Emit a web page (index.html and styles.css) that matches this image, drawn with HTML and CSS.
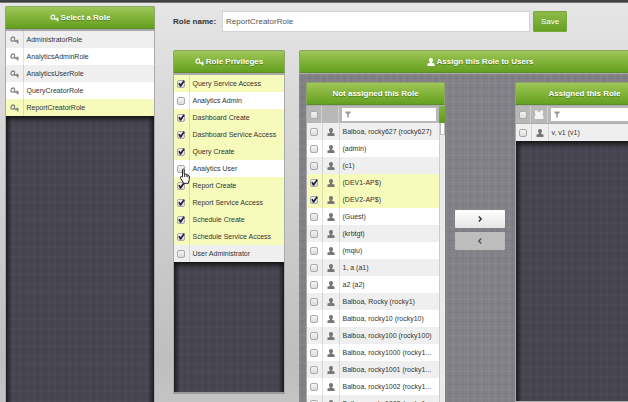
FILE: index.html
```html
<!DOCTYPE html>
<html lang="en">
<head>
<meta charset="utf-8">
<title>Roles</title>
<link rel="stylesheet" href="styles.css">
</head>
<body>
<svg class="defs" aria-hidden="true">
  <symbol id="key" viewBox="0 0 9 8"><path d="M4.7 4.6L2.6 5.2Q.7 5 .9 3.2Q1.4 .8 3.4 .9Q5 1.2 4.7 3.2L4.3 4.2L6.2 5.6" fill="none" stroke="currentColor" stroke-width="1.1"/><path d="M5.4 5.3L7.8 3.9V7.6M6 5.8H8.6" fill="none" stroke="currentColor" stroke-width="1"/></symbol>
  <symbol id="user" viewBox="0 0 8 8"><path d="M4 0C5.4 0 6 .9 6 2.1C6 3.2 5.5 3.7 5.2 4.2V4.9L7.5 5.6V8H.5V5.6L2.8 4.9V4.2C2.5 3.7 2 3.2 2 2.1C2 .9 2.6 0 4 0Z" fill="currentColor"/></symbol>
  <symbol id="users" viewBox="0 0 10 9"><path d="M1 .5H3.6V2.5L5 1.2L6.4 2.5V.5H9V4L8 4.5L9.4 6V9H.6V6L2 4.5L1 4Z" fill="currentColor"/></symbol>
  <symbol id="funnel" viewBox="0 0 6 7"><path d="M.3 .5H5.7V1.6L3.7 3.4V6.8H2.3V3.4L.3 1.6Z" fill="currentColor"/></symbol>
</svg>
<div class="topbar"></div>
<div class="page">
  <section class="panel roles">
    <h2 class="title"><svg class="key"><use href="#key"/></svg>Select a Role</h2>
    <div class="well">
      <table class="list">
        <tr><td class="icon"><svg class="key"><use href="#key"/></svg></td><td>AdministratorRole</td></tr>
        <tr><td class="icon"><svg class="key"><use href="#key"/></svg></td><td>AnalyticsAdminRole</td></tr>
        <tr><td class="icon"><svg class="key"><use href="#key"/></svg></td><td>AnalyticsUserRole</td></tr>
        <tr><td class="icon"><svg class="key"><use href="#key"/></svg></td><td>QueryCreatorRole</td></tr>
        <tr class="on"><td class="icon"><svg class="key"><use href="#key"/></svg></td><td>ReportCreatorRole</td></tr>
      </table>
    </div>
  </section>
  <main class="main">
    <form class="name-form">
      <label for="role-name">Role name:</label>
      <input type="text" id="role-name" value="ReportCreatorRole">
      <button type="button" class="save">Save</button>
    </form>
    <div class="columns">
      <section class="panel privileges">
        <h2 class="title"><svg class="key"><use href="#key"/></svg>Role Privileges</h2>
        <div class="well">
          <table class="list">
            <tr class="on"><td class="tick"><input type="checkbox" id="p1" checked></td><td><label for="p1">Query Service Access</label></td></tr>
            <tr><td class="tick"><input type="checkbox" id="p2"></td><td><label for="p2">Analytics Admin</label></td></tr>
            <tr class="on"><td class="tick"><input type="checkbox" id="p3" checked></td><td><label for="p3">Dashboard Create</label></td></tr>
            <tr class="on"><td class="tick"><input type="checkbox" id="p4" checked></td><td><label for="p4">Dashboard Service Access</label></td></tr>
            <tr class="on"><td class="tick"><input type="checkbox" id="p5" checked></td><td><label for="p5">Query Create</label></td></tr>
            <tr><td class="tick"><input type="checkbox" id="p6"><svg class="cursor" viewBox="0 0 10 16"><path d="M2.5 9V1.5Q3.3 .2 4.2 1.5V6L5.5 6L6.8 6.5L8 7L9.3 8V11.5L8.3 15.3H3.6L.6 10.2V8.8L1.4 8.5Z" fill="#fff" stroke="#222" stroke-width="1"/><path d="M4.5 6V9M6.2 6.6V9M7.8 7.2V9.4" stroke="#222" stroke-width=".8"/></svg></td><td><label for="p6">Analytics User</label></td></tr>
            <tr class="on"><td class="tick"><input type="checkbox" id="p7" checked></td><td><label for="p7">Report Create</label></td></tr>
            <tr class="on"><td class="tick"><input type="checkbox" id="p8" checked></td><td><label for="p8">Report Service Access</label></td></tr>
            <tr class="on"><td class="tick"><input type="checkbox" id="p9" checked></td><td><label for="p9">Schedule Create</label></td></tr>
            <tr class="on"><td class="tick"><input type="checkbox" id="p10" checked></td><td><label for="p10">Schedule Service Access</label></td></tr>
            <tr><td class="tick"><input type="checkbox" id="p11"></td><td><label for="p11">User Administrator</label></td></tr>
          </table>
        </div>
      </section>
      <section class="panel assign">
        <h2 class="title"><svg class="user"><use href="#user"/></svg>Assign this Role to Users</h2>
        <div class="transfer">
          <section class="panel users">
            <h3 class="title">Not assigned this Role</h3>
            <div class="filter">
              <span class="tick"><input type="checkbox" aria-label="Select all unassigned"></span>
              <span class="icon"></span>
              <span class="search"><svg class="funnel"><use href="#funnel"/></svg><input type="text" aria-label="Filter unassigned"></span>
              <span class="cap"></span>
            </div>
            <div class="scroll">
              <table class="list">
                <tr><td class="tick"><input type="checkbox" id="u1"></td><td class="icon"><svg class="user"><use href="#user"/></svg></td><td><label for="u1">Balboa, rocky627 (rocky627)</label></td></tr>
                <tr><td class="tick"><input type="checkbox" id="u2"></td><td class="icon"><svg class="user"><use href="#user"/></svg></td><td><label for="u2">(admin)</label></td></tr>
                <tr><td class="tick"><input type="checkbox" id="u3"></td><td class="icon"><svg class="user"><use href="#user"/></svg></td><td><label for="u3">(c1)</label></td></tr>
                <tr class="on"><td class="tick"><input type="checkbox" id="u4" checked></td><td class="icon"><svg class="user"><use href="#user"/></svg></td><td><label for="u4">(DEV1-AP$)</label></td></tr>
                <tr class="on"><td class="tick"><input type="checkbox" id="u5" checked></td><td class="icon"><svg class="user"><use href="#user"/></svg></td><td><label for="u5">(DEV2-AP$)</label></td></tr>
                <tr><td class="tick"><input type="checkbox" id="u6"></td><td class="icon"><svg class="user"><use href="#user"/></svg></td><td><label for="u6">(Guest)</label></td></tr>
                <tr><td class="tick"><input type="checkbox" id="u7"></td><td class="icon"><svg class="user"><use href="#user"/></svg></td><td><label for="u7">(krbtgt)</label></td></tr>
                <tr><td class="tick"><input type="checkbox" id="u8"></td><td class="icon"><svg class="user"><use href="#user"/></svg></td><td><label for="u8">(mqiu)</label></td></tr>
                <tr><td class="tick"><input type="checkbox" id="u9"></td><td class="icon"><svg class="user"><use href="#user"/></svg></td><td><label for="u9">1, a (a1)</label></td></tr>
                <tr><td class="tick"><input type="checkbox" id="u10"></td><td class="icon"><svg class="user"><use href="#user"/></svg></td><td><label for="u10">a2 (a2)</label></td></tr>
                <tr><td class="tick"><input type="checkbox" id="u11"></td><td class="icon"><svg class="user"><use href="#user"/></svg></td><td><label for="u11">Balboa, Rocky (rocky1)</label></td></tr>
                <tr><td class="tick"><input type="checkbox" id="u12"></td><td class="icon"><svg class="user"><use href="#user"/></svg></td><td><label for="u12">Balboa, rocky10 (rocky10)</label></td></tr>
                <tr><td class="tick"><input type="checkbox" id="u13"></td><td class="icon"><svg class="user"><use href="#user"/></svg></td><td><label for="u13">Balboa, rocky100 (rocky100)</label></td></tr>
                <tr><td class="tick"><input type="checkbox" id="u14"></td><td class="icon"><svg class="user"><use href="#user"/></svg></td><td><label for="u14">Balboa, rocky1000 (rocky1...</label></td></tr>
                <tr><td class="tick"><input type="checkbox" id="u15"></td><td class="icon"><svg class="user"><use href="#user"/></svg></td><td><label for="u15">Balboa, rocky1001 (rocky1...</label></td></tr>
                <tr><td class="tick"><input type="checkbox" id="u16"></td><td class="icon"><svg class="user"><use href="#user"/></svg></td><td><label for="u16">Balboa, rocky1002 (rocky1...</label></td></tr>
                <tr><td class="tick"><input type="checkbox" id="u17"></td><td class="icon"><svg class="user"><use href="#user"/></svg></td><td><label for="u17">Balboa, rocky1003 (rocky1...</label></td></tr>
              </table>
              <div class="track"><div class="thumb"></div></div>
            </div>
          </section>
          <div class="moves">
            <button type="button" aria-label="Assign"><svg viewBox="0 0 4 6"><path d="M.8 .5L3.2 3L.8 5.5" fill="none" stroke="#333" stroke-width="1.4"/></svg></button>
            <button type="button" aria-label="Unassign" disabled><svg viewBox="0 0 4 6"><path d="M3.2 .5L.8 3L3.2 5.5" fill="none" stroke="#555" stroke-width="1.4"/></svg></button>
          </div>
          <section class="panel users">
            <h3 class="title">Assigned this Role</h3>
            <div class="filter">
              <span class="tick"><input type="checkbox" aria-label="Select all assigned"></span>
              <span class="icon"><svg class="group"><use href="#users"/></svg></span>
              <span class="search"><svg class="funnel"><use href="#funnel"/></svg><input type="text" aria-label="Filter assigned"></span>
            </div>
            <div class="well">
              <table class="list">
                <tr><td class="tick"><input type="checkbox" id="a1"></td><td class="icon"><svg class="user"><use href="#user"/></svg></td><td><label for="a1">v, v1 (v1)</label></td></tr>
              </table>
            </div>
          </section>
        </div>
      </section>
    </div>
  </main>
</div>
</body>
</html>
```

FILE: styles.css
```css
* { box-sizing: border-box; }

body {
  margin: 0;
  height: 100vh;
  overflow: hidden;
  display: flex;
  flex-direction: column;
  font: 7px/17px "Liberation Sans", sans-serif;
  color: #333;
  background: linear-gradient(#e6e6e6, #dcdcdc 20%, #bebebe 90%, #c4c4c4);
}

.defs { position: absolute; width: 0; height: 0; }

.topbar {
  height: 3px;
  flex: none;
  background: linear-gradient(#444, #444 1px, #333 2px, #bbb);
}

.page {
  flex: 1;
  min-height: 0;
  display: flex;
  gap: 18px;
  padding: 3px 0 0 5px;
}

.panel {
  display: flex;
  flex-direction: column;
  min-height: 0;
}

.title {
  flex: none;
  height: 23px;
  margin: 0;
  display: flex;
  align-items: center;
  justify-content: center;
  gap: 2px;
  font-size: 8px;
  font-weight: bold;
  color: #fff;
  text-shadow: 0 1px 1px #4c7a18;
  border-radius: 2px 2px 0 0;
  border: 1px solid #8aa862;
  border-bottom-color: #5d8a2a;
  background: linear-gradient(#9fc65a, #84b53d 45%, #64a020);
}

.key { width: 9px; height: 8px; }
.user { width: 8px; height: 8px; }
.group { width: 10px; height: 9px; color: #f4f4f4; }
.funnel { width: 6px; height: 7px; color: #999; flex: none; }

.well {
  flex: 1;
  min-height: 0;
  overflow: hidden;
  border: 1px solid #aaa;
  background:
    linear-gradient(90deg, #1c1c22, #1c1c2200 6px),
    linear-gradient(270deg, #1c1c22, #1c1c2200 6px),
    repeating-linear-gradient(90deg, #ffffff06 0 1px, #0000 1px 3px, #00000008 3px 4px, #0000 4px 7px),
    repeating-linear-gradient(#ffffff06 0 1px, #0000 1px 4px, #00000008 4px 5px, #0000 5px 9px),
    #474650;
}

.roles .well,
.privileges .well { border-top: 2px solid #aaa; }

.list {
  width: 100%;
  table-layout: fixed;
  border-collapse: collapse;
  box-shadow: 0 1px 5px 2px #111;
}

.list td {
  height: 17px;
  padding: 0 0 0 3px;
  white-space: nowrap;
  background: #fff;
}

.list tr:nth-child(odd) td { background: #efefef; }
.list tr.on td { background: #f6fabb; }

.list td.icon,
.list td.tick {
  padding: 0;
  text-align: center;
  border-right: 1px solid #0000001c;
  color: #777;
  line-height: 0;
}

.icon { width: 17px; }
.tick { width: 15px; }
.tick svg, .icon svg { vertical-align: middle; }

input[type="checkbox"] {
  appearance: none;
  position: relative;
  width: 8px;
  height: 8px;
  margin: 0;
  vertical-align: middle;
  border: 1px solid #aaa;
  border-radius: 2px;
  background: linear-gradient(#f4f4f4, #dcdcdc);
}

input[type="checkbox"]:checked::after {
  content: "";
  position: absolute;
  inset: -1px;
  background: #22223a;
  clip-path: polygon(12% 50%, 30% 40%, 42% 58%, 78% 8%, 96% 18%, 48% 92%, 34% 92%);
}

.roles { width: 150px; flex: none; }
.roles .well { border-bottom: 0; }

.main {
  flex: 1;
  min-width: 0;
  display: flex;
  flex-direction: column;
}

.name-form {
  display: flex;
  align-items: center;
  gap: 3px;
  height: 21px;
  margin: 5px 0 18px;
  font-size: 8px;
}

.name-form label { width: 46px; font-weight: bold; }

.name-form input {
  width: 308px;
  height: 21px;
  padding: 0 3px;
  font: inherit;
  color: #555;
  background: #fff;
  border: 1px solid #d4d4d4;
}

.save {
  width: 34px;
  height: 21px;
  padding: 0;
  font: inherit;
  color: #fff;
  border: 1px solid #79a83a;
  border-radius: 1px;
  background: linear-gradient(#8dba49, #65a122);
}

.columns {
  flex: 1;
  min-height: 0;
  display: flex;
  gap: 14px;
}

.privileges { width: 112px; flex: none; margin-bottom: 8px; }
.privileges .well { border-bottom: 2px solid #999; }
.privileges .list td:first-child { position: relative; }

.cursor {
  position: absolute;
  left: 6px;
  top: 8px;
  width: 10px;
  height: 16px;
  z-index: 1;
}

.assign { flex: 1 0 362px; }

.transfer {
  flex: 1;
  min-height: 0;
  display: flex;
  padding: 8px 7px 0;
  border-top: 1px solid #aaa;
  background:
    repeating-linear-gradient(90deg, #ffffff0a 0 1px, #0000 1px 3px, #00000008 3px 4px, #0000 4px 7px),
    repeating-linear-gradient(#ffffff0a 0 1px, #0000 1px 4px, #00000008 4px 5px, #0000 5px 9px),
    #828188;
}

.users { flex: 0 0 139px; min-width: 0; }

.filter {
  flex: none;
  display: flex;
  height: 18px;
  border: 1px solid #aaa;
  border-width: 1px 0 0 1px;
  background: #b8b8b8;
}

.filter .tick,
.filter .icon {
  flex: none;
  display: flex;
  align-items: center;
  justify-content: center;
  border-right: 1px solid #d0d0d0;
}

.search {
  flex: 1;
  min-width: 0;
  display: flex;
  align-items: center;
  margin: 2px 3px;
  padding-left: 3px;
  background: #fff;
}

.search input {
  flex: 1;
  min-width: 0;
  height: 12px;
  padding: 0 3px;
  border: 0;
  background: none;
  font: inherit;
}

.cap { width: 6px; background: linear-gradient(#82b43b, #5f9c1c); }

.scroll {
  flex: 1;
  min-height: 0;
  display: flex;
  overflow: hidden;
  border-left: 1px solid #aaa;
}

.scroll .list { flex: 1; min-width: 0; height: max-content; box-shadow: none; }

.track { width: 6px; flex: none; background: #ebebeb; border-left: 1px solid #ccc; }
.thumb { height: 12px; background: #fff; border: 1px solid #bbb; border-top: 0; }

.moves {
  flex: 1;
  display: flex;
  flex-direction: column;
  align-items: center;
  gap: 4px;
  padding-top: 128px;
}

.moves button {
  width: 50px;
  height: 18px;
  padding: 0;
  display: flex;
  align-items: center;
  justify-content: center;
  border: 0;
  border-radius: 1px;
  background: linear-gradient(#fff, #e6e6e6);
}

.moves button:disabled { background: #bdbdbd; }
.moves svg { width: 4px; height: 6px; }
```
